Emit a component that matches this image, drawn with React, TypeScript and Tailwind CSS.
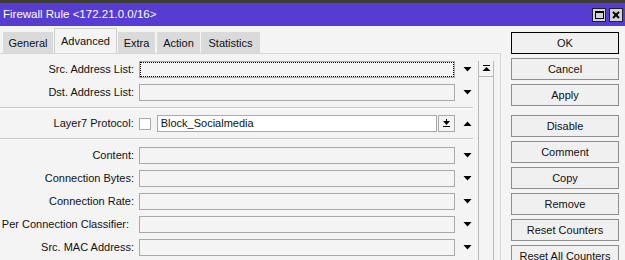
import React from "react";

const font = { fontFamily: '"Liberation Sans", Arial, sans-serif' };

function Down() {
  return (
    <svg width="9" height="5" viewBox="0 0 9 5">
      <polygon points="0.5,0 8.5,0 4.5,4.5" fill="#000" />
    </svg>
  );
}
function Up() {
  return (
    <svg width="9" height="5" viewBox="0 0 9 5">
      <polygon points="0.5,5 8.5,5 4.5,0.5" fill="#000" />
    </svg>
  );
}

function Field({ focused }: { focused?: boolean }) {
  return (
    <div className="w-[316px] h-[17px] border border-[#a9a9a9] bg-[#f4f4f4]">
      {focused && <div className="h-full w-full border border-dotted border-black" />}
    </div>
  );
}

function Row({ label, focused, extra }: { label: string; focused?: boolean; extra?: string }) {
  return (
    <div className="flex items-center h-[17px]">
      <div className={`w-[134px] text-right text-[11px] text-[#111] whitespace-nowrap ${extra ?? ""}`}>{label}</div>
      <div className="ml-[5px]">
        <Field focused={focused} />
      </div>
      <div className="w-[23px] flex justify-center pl-[1px]">
        <Down />
      </div>
    </div>
  );
}

function Sep() {
  return <div className="h-[2px] w-[473px] border-t border-[#c8c8c8] border-b border-b-white" />;
}

const tabs: { t: string; w: string; ml: string }[] = [
  { t: "General", w: "w-[50px]", ml: "ml-0" },
  { t: "Advanced", w: "w-[63px]", ml: "ml-[1px]" },
  { t: "Extra", w: "w-[37px]", ml: "ml-[1px]" },
  { t: "Action", w: "w-[43px]", ml: "ml-[2px]" },
  { t: "Statistics", w: "w-[59px]", ml: "ml-[1px]" },
];

function Btn({ label, def }: { label: string; def?: boolean }) {
  return (
    <div
      className={`w-[108px] h-[22px] flex items-center justify-center text-[11px] text-[#111] bg-[#f0f0f0] border ${
        def ? "border-black" : "border-[#8e8e8e]"
      }`}
    >
      {label}
    </div>
  );
}

export default function App() {
  return (
    <div className="w-[625px] h-[260px] overflow-hidden bg-[#f4f4f4]" style={font}>
      {/* Title bar */}
      <div className="h-[26px] border-t-[3px] border-[#3c3c3c] bg-[#573cd1] flex items-center justify-between pl-[3px] pr-[2px]">
        <span className="text-white text-[11.5px] leading-none">Firewall Rule &lt;172.21.0.0/16&gt;</span>
        <div className="flex gap-[3px] mt-[1px]">
          <div className="w-[14px] h-[14px] bg-[#d4d4d4] border border-[#222] flex items-center justify-center">
            <div className="w-[9px] h-[8px] border border-black border-t-2" />
          </div>
          <div className="w-[14px] h-[14px] bg-[#d4d4d4] border border-[#222] flex items-center justify-center">
            <svg width="8" height="8" viewBox="0 0 8 8">
              <path d="M1 1 L7 7 M7 1 L1 7" stroke="#000" strokeWidth="2" />
            </svg>
          </div>
        </div>
      </div>

      <div className="flex">
        {/* Left */}
        <div className="w-[501px]">
          <div className="flex items-end h-[27px] pl-[3px]">
            {tabs.map(({ t, w, ml }) =>
              t === "Advanced" ? (
                <div
                  key={t}
                  className={`${w} ${ml} h-[25px] flex justify-center items-start pt-[4px] bg-[#f4f4f4] border-l border-r border-t border-[#d0d0d0] text-[11px] text-[#111]`}
                >
                  {t}
                </div>
              ) : (
                <div
                  key={t}
                  className={`${w} ${ml} h-[21px] flex justify-center items-center pt-[2px] bg-[#dadada] text-[11px] text-[#111]`}
                >
                  {t}
                </div>
              )
            )}
          </div>
          <div className="h-[207px] border-t border-r border-[#d6d6d6] flex">
            <div className="w-[478px] pt-[7px] flex flex-col gap-[6px]">
              <Row label="Src. Address List:" focused />
              <Row label="Dst. Address List:" />
              <Sep />
              <div className="flex items-center h-[17px]">
                <div className="w-[134px] text-right text-[11px] text-[#111]">Layer7 Protocol:</div>
                <div className="ml-[5px] w-[12px] h-[12px] border border-[#a9a9a9] bg-white" />
                <div className="ml-[6px] w-[281px] h-[17px] border border-[#a9a9a9] bg-white text-[11px] text-[#111] flex items-center pl-[3px]">
                  Block_Socialmedia
                </div>
                <div className="ml-[1px] w-[17px] h-[17px] border border-[#a9a9a9] bg-[#f4f4f4] flex items-center justify-center">
                  <svg width="9" height="9" viewBox="0 0 9 9">
                    <polygon points="1,2 8,2 4.5,6" fill="#000" />
                    <rect x="1" y="7" width="7" height="1" fill="#000" />
                    <rect x="4" y="0" width="1" height="3" fill="#000" />
                  </svg>
                </div>
                <div className="w-[23px] flex justify-center pl-[1px]">
                  <Up />
                </div>
              </div>
              <Sep />
              <div className="flex flex-col gap-[6px] mt-[1px]">
                <Row label="Content:" />
                <Row label="Connection Bytes:" />
                <Row label="Connection Rate:" />
                <Row label="Per Connection Classifier:" extra="pr-[5px]" />
                <Row label="Src. MAC Address:" />
              </div>
            </div>
            {/* scrollbar */}
            <div className="w-[16px] mt-[7px] border-l border-r border-[#b8b8b8] flex flex-col">
              <div className="h-[16px] border-b border-[#b8b8b8] flex items-center justify-center">
                <svg width="9" height="7" viewBox="0 0 9 7">
                  <rect x="1" y="0" width="7" height="1" fill="#000" />
                  <polygon points="0.5,6 8.5,6 4.5,2" fill="#000" />
                </svg>
              </div>
            </div>
          </div>
        </div>
        {/* Right buttons */}
        <div className="ml-[10px] pt-[6px] flex flex-col">
          <div className="flex flex-col gap-[4px]">
            <Btn label="OK" def />
            <Btn label="Cancel" />
            <Btn label="Apply" />
          </div>
          <div className="flex flex-col gap-[4px] mt-[9px]">
            <Btn label="Disable" />
            <Btn label="Comment" />
            <Btn label="Copy" />
            <Btn label="Remove" />
            <Btn label="Reset Counters" />
            <Btn label="Reset All Counters" />
          </div>
        </div>
      </div>
    </div>
  );
}
